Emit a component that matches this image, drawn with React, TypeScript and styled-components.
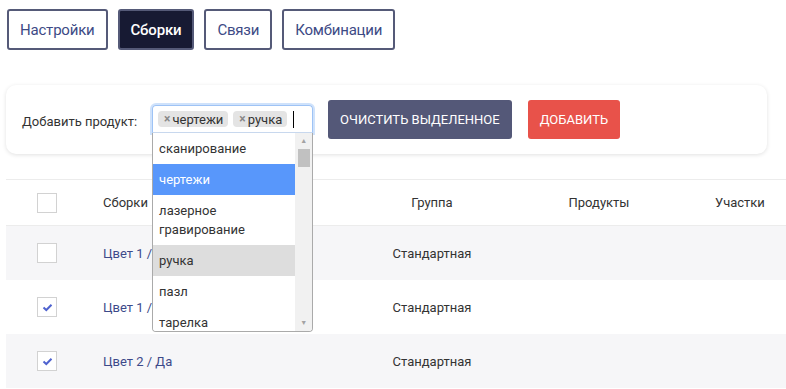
import styled, { createGlobalStyle } from "styled-components";

const GlobalStyle = createGlobalStyle`
  html, body {
    margin: 0;
    padding: 0;
    background: #fff;
    font-family: Roboto, "Noto Sans", sans-serif;
    overflow: hidden;
  }
`

const tabs = ['Настройки', 'Сборки', 'Связи', 'Комбинации']

const options = [
  { label: 'сканирование' },
  { label: 'чертежи', state: 'active' },
  { label: 'лазерное гравирование' },
  { label: 'ручка', state: 'selected' },
  { label: 'пазл' },
  { label: 'тарелка' },
]

const rows = [
  { name: 'Цвет 1 / Нет', group: 'Стандартная', checked: false, shade: true },
  { name: 'Цвет 1 / Да', group: 'Стандартная', checked: true, shade: false },
  { name: 'Цвет 2 / Да', group: 'Стандартная', checked: true, shade: true },
]

const Check = ({ checked }: { checked?: boolean }) => (
  <Box>
    {checked && (
      <svg width="11" height="9" viewBox="0 0 11 9">
        <path d="M1.5 4.5 L4.3 7 L9.5 1.8" fill="none" stroke="#4f63cf" strokeWidth="2" />
      </svg>
    )}
  </Box>
)

const App = () => {
  return (
    <Page>
      <GlobalStyle />
      <Tabs>
        {tabs.map((t) => (
          <Tab key={t} $active={t === 'Сборки'}>{t}</Tab>
        ))}
      </Tabs>

      <Card>
        <Label>Добавить продукт:</Label>
        <SelectWrap>
          <SelectBox>
            <Chip><ChipX>×</ChipX>чертежи</Chip>
            <Chip><ChipX>×</ChipX>ручка</Chip>
            <Caret />
          </SelectBox>
          <Dropdown>
            <OptionList>
              {options.map((o) => (
                <Option key={o.label} $state={o.state}>{o.label}</Option>
              ))}
            </OptionList>
            <Scrollbar>
              <Arrow>▲</Arrow>
              <Thumb />
              <Track />
              <Arrow>▼</Arrow>
            </Scrollbar>
          </Dropdown>
        </SelectWrap>
        <Button $color="#545878">Очистить выделенное</Button>
        <Button $color="#e8524a">Добавить</Button>
      </Card>

      <Table>
        <HeadRow>
          <Cell><Check /></Cell>
          <NameCell>Сборки</NameCell>
          <CenterCell>Группа</CenterCell>
          <CenterCell>Продукты</CenterCell>
          <CenterCell>Участки</CenterCell>
        </HeadRow>
        {rows.map((r, i) => (
          <Row key={i} $shade={r.shade}>
            <Cell><Check checked={r.checked} /></Cell>
            <NameCell><Link>{r.name}</Link></NameCell>
            <CenterCell>{r.group}</CenterCell>
            <CenterCell />
            <CenterCell />
          </Row>
        ))}
      </Table>
    </Page>
  )
}

const Page = styled.div`
  width: 786px;
  height: 389px;
  padding: 9px 0 0 6px;
  box-sizing: border-box;
  overflow: hidden;
`

const Tabs = styled.div`
  display: flex;
  gap: 10px;
  padding-left: 1px;
`

const Tab = styled.div<{ $active?: boolean }>`
  height: 41px;
  box-sizing: border-box;
  padding: 0 11px;
  display: flex;
  align-items: center;
  border: 2px solid #555a78;
  border-radius: 3px;
  font-size: 15px;
  color: ${(p) => (p.$active ? '#fff' : '#3d4a85')};
  background: ${(p) => (p.$active ? '#171a33' : '#fff')};
  font-weight: ${(p) => (p.$active ? 500 : 400)};
  letter-spacing: -0.2px;
`

const Card = styled.div`
  margin-top: 35px;
  width: 761px;
  height: 69px;
  box-sizing: border-box;
  padding: 15px 16px;
  display: flex;
  align-items: center;
  gap: 15px;
  background: #fff;
  border-radius: 10px;
  box-shadow: 0 1px 4px rgba(0, 0, 0, 0.12);
  position: relative;
  z-index: 2;
`

const Label = styled.span`
  font-size: 13px;
  color: #333;
  margin-top: 3px;
`

const SelectWrap = styled.div`
  position: relative;
  width: 161px;
  margin-top: -1px;
`

const SelectBox = styled.div`
  height: 28px;
  box-sizing: border-box;
  border: 1px solid #9ec3f5;
  border-bottom-color: #c8d8ee;
  border-radius: 4px 4px 0 0;
  box-shadow: 0 0 0 2px #cfe2fb;
  display: flex;
  align-items: center;
  gap: 5px;
  padding: 0 5px;
`

const Chip = styled.span`
  display: flex;
  align-items: center;
  height: 16px;
  padding: 0 5px 0 6px;
  background: #e4e4e4;
  border-radius: 4px;
  font-size: 13px;
  color: #333;
`

const ChipX = styled.span`
  color: #888;
  font-weight: 700;
  font-size: 12px;
  margin-right: 2px;
`

const Caret = styled.span`
  width: 1px;
  height: 17px;
  background: #000;
  margin-left: 1px;
`

const Dropdown = styled.div`
  position: absolute;
  top: 28px;
  left: 0;
  width: 161px;
  height: 199px;
  box-sizing: border-box;
  border: 1px solid #aaa;
  border-top: none;
  border-radius: 0 0 4px 4px;
  background: #fff;
  display: flex;
  overflow: hidden;
`

const OptionList = styled.div`
  flex: 1;
  overflow: hidden;
`

const Option = styled.div<{ $state?: string }>`
  padding: 6px 6px;
  font-size: 13px;
  line-height: 19px;
  color: ${(p) => (p.$state === 'active' ? '#fff' : '#333')};
  background: ${(p) =>
    p.$state === 'active' ? '#5897fb' : p.$state === 'selected' ? '#ddd' : '#fff'};
`

const Scrollbar = styled.div`
  width: 17px;
  background: #f1f1f1;
  display: flex;
  flex-direction: column;
  align-items: center;
`

const Arrow = styled.div`
  font-size: 7px;
  color: #a3a3a3;
  height: 16px;
  line-height: 16px;
`

const Thumb = styled.div`
  width: 12px;
  height: 18px;
  background: #c1c1c1;
`

const Track = styled.div`
  flex: 1;
`

const Button = styled.div<{ $color: string }>`
  height: 39px;
  display: flex;
  align-items: center;
  padding: 0 12px;
  background: ${(p) => p.$color};
  color: #fff;
  border-radius: 3px;
  font-size: 13px;
  text-transform: uppercase;
  margin-top: -1px;
  &:last-child {
    margin-left: 1px;
  }
`

const Table = styled.div`
  margin-top: 25px;
  border-top: 1px solid #ececec;
  width: 786px;
`

const HeadRow = styled.div`
  display: grid;
  grid-template-columns: 82px 266px 156px 178px 104px;
  height: 45px;
  align-items: center;
  font-size: 13px;
  color: #333;
  border-bottom: 1px solid #ececec;
`

const Row = styled.div<{ $shade?: boolean }>`
  display: grid;
  grid-template-columns: 82px 266px 156px 178px 104px;
  height: 54px;
  align-items: center;
  font-size: 13px;
  color: #333;
  background: ${(p) => (p.$shade ? '#f6f6f8' : '#fff')};
`

const Cell = styled.div`
  display: flex;
  justify-content: center;
`

const NameCell = styled.div`
  padding-left: 15px;
`

const CenterCell = styled.div`
  text-align: center;
`

const Link = styled.span`
  color: #3d4a8a;
`

const Box = styled.div`
  width: 20px;
  height: 20px;
  box-sizing: border-box;
  border: 1px solid #d2d2d2;
  background: #fff;
  display: flex;
  align-items: center;
  justify-content: center;
`

export default App
